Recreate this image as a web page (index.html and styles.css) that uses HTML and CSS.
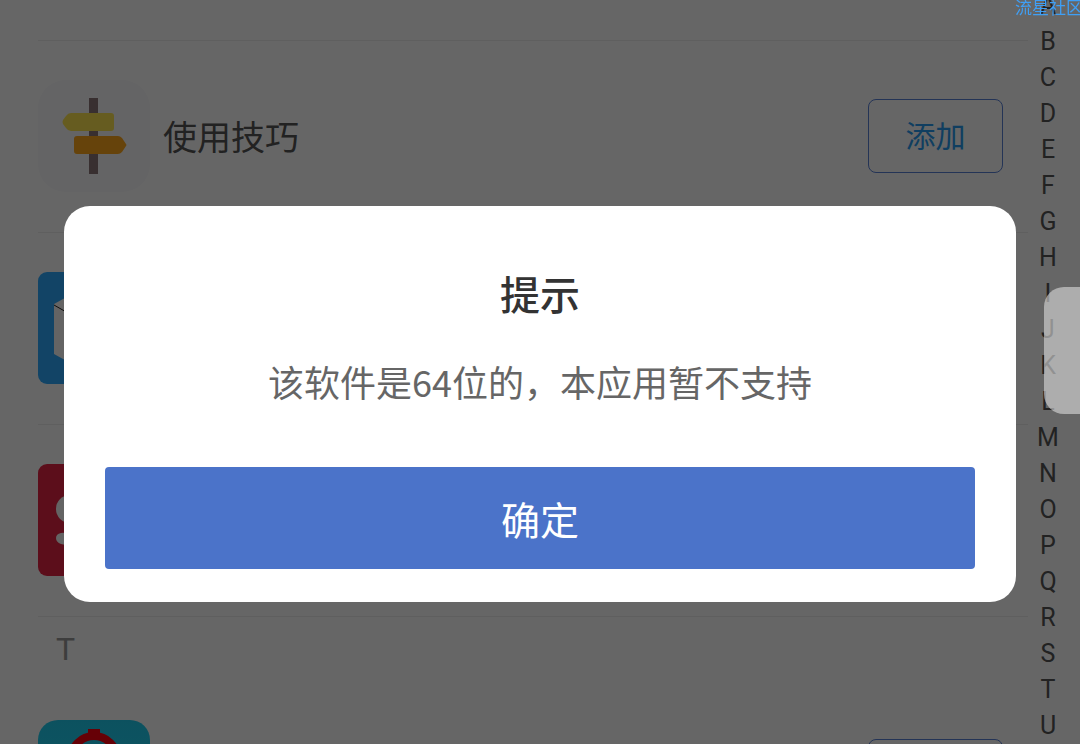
FILE: index.html
```html
<!DOCTYPE html>
<html lang="zh-CN">
<head>
  <meta charset="UTF-8">
  <meta name="viewport" content="width=device-width, initial-scale=1.0">
  <title>添加应用</title>
  <link rel="stylesheet" href="styles.css">
</head>
<body>
  <div class="screen">
    <!-- 应用列表 -->
    <main class="app-list">
      <div class="list-top"></div>
      <div class="app-row">
        <svg class="app-icon" viewBox="0 0 112 112" aria-hidden="true">
          <rect width="112" height="112" rx="28" fill="#fafafc"/>
          <rect x="51" y="18" width="9" height="76" fill="#8c7678"/>
          <path d="M33 33h40q3 0 3 3v12q0 3-3 3H33q-3 0-5-3l-3-4q-1-2 0-4l3-4q2-3 5-3z" fill="#ffe650"/>
          <path d="M39 56h41q2 0 4 2l4 6q1 1 0 2l-4 6q-2 2-4 2H39q-3 0-3-3V59q0-3 3-3z" fill="#ffa81c"/>
        </svg>
        <span class="app-name">使用技巧</span>
        <button class="add-btn" type="button">添加</button>
      </div>
      <div class="app-row">
        <svg class="app-icon" viewBox="0 0 112 112" aria-hidden="true">
          <rect width="112" height="112" rx="9" fill="#2fabff"/>
          <path d="M16 32l40-22 40 22v50L56 104 16 82z" fill="#fafafa"/>
          <path d="M16 33l40 23 40-23" fill="none" stroke="#222" stroke-width="1"/>
        </svg>
      </div>
      <div class="app-row">
        <svg class="app-icon" viewBox="0 0 112 112" aria-hidden="true">
          <rect width="112" height="112" rx="9" fill="#e62545"/>
          <circle cx="32" cy="45" r="14" fill="#fafafa"/>
          <path d="M23 69q4-1 8 2 6 4 13 5v6q-12 0-21-2-5-2-5-6t5-5z" fill="#fafafa"/>
        </svg>
      </div>
      <h2 class="group-title">T</h2>
      <div class="app-row">
        <svg class="app-icon" viewBox="0 0 112 112" aria-hidden="true">
          <defs>
            <linearGradient id="teal" x1="0" y1="0" x2="0" y2="1">
              <stop offset="0" stop-color="#20cbee"/>
              <stop offset="1" stop-color="#22e0f6"/>
            </linearGradient>
          </defs>
          <rect width="112" height="112" rx="20" fill="url(#teal)"/>
          <circle cx="56" cy="39" r="23" fill="none" stroke="#ff0010" stroke-width="8"/>
          <path d="M50 9h12v6H50z" fill="#ff0010"/>
        </svg>
        <button class="add-btn" type="button">添加</button>
      </div>
    </main>

    <!-- 字母索引 -->
    <nav class="letters" aria-label="字母索引">
      <span>A</span><span>B</span><span>C</span><span>D</span><span>E</span><span>F</span><span>G</span>
      <span>H</span><span>I</span><span>J</span><span>K</span><span>L</span><span>M</span><span>N</span>
      <span>O</span><span>P</span><span>Q</span><span>R</span><span>S</span><span>T</span><span>U</span>
    </nav>
  </div>

  <!-- 提示弹窗 -->
  <div class="mask">
    <div class="dialog" role="alertdialog" aria-modal="true" aria-labelledby="dialog-title" aria-describedby="dialog-text">
      <h1 class="dialog-title" id="dialog-title">提示</h1>
      <p class="dialog-text" id="dialog-text">该软件是64位的，本应用暂不支持</p>
      <button class="dialog-btn" type="button">确定</button>
    </div>
  </div>

  <div class="side-handle"></div>
  <div class="watermark">流星社区</div>
</body>
</html>
```

FILE: styles.css
```css
* {
  box-sizing: border-box;
}
body {
  margin: 0;
  background: #fff;
  font-family: Roboto, "Noto Sans CJK SC", sans-serif;
  overflow: hidden;
}
.screen {
  display: flex;
  height: 100vh;
  overflow: hidden;
}

/* 列表 */
.app-list {
  flex: 1;
  padding-left: 38px;
}
.list-top {
  height: 41px;
  border-bottom: 1px solid #eee;
}
.app-row {
  display: flex;
  align-items: center;
  gap: 13px;
  padding: 39px 25px 40px 0;
  border-bottom: 1px solid #eee;
}
.app-icon {
  width: 112px;
  height: 112px;
  flex-shrink: 0;
}
.app-name {
  padding-top: 4px;
  font-size: 34px;
  line-height: 48px;
  color: #555;
}
.add-btn {
  width: 135px;
  height: 74px;
  margin-left: auto;
  padding: 0 0 4px;
  border: 1px solid #5a82d8;
  border-radius: 8px;
  background: none;
  color: #2a9cf0;
  font-family: inherit;
  font-size: 30px;
}
.group-title {
  margin: 0;
  padding-left: 18px;
  font-size: 32px;
  font-weight: 400;
  line-height: 64px;
  color: #999;
}

/* 右侧字母 */
.letters {
  display: flex;
  flex-direction: column;
  justify-content: flex-end;
  width: 52px;
  padding-right: 12px;
  font-size: 25px;
  line-height: 36px;
  text-align: center;
  color: #555;
}

/* 弹窗 */
.mask {
  position: fixed;
  inset: 0;
  display: flex;
  align-items: center;
  padding: 64px 64px 0;
  background: rgba(0, 0, 0, 0.6);
}
.dialog {
  flex: 1;
  padding: 57px 41px 33px;
  border-radius: 26px;
  background: #fff;
  font-family: "Noto Sans CJK SC", sans-serif;
  text-align: center;
}
.dialog-title {
  margin: 0 0 32px;
  font-size: 40px;
  font-weight: 500;
  line-height: 60px;
  color: #333;
}
.dialog-text {
  margin: 0 0 60px;
  font-size: 36px;
  line-height: 52px;
  color: #666;
}
.dialog-btn {
  display: block;
  width: 100%;
  height: 102px;
  padding: 0;
  border: 0;
  border-radius: 4px;
  background: #4b73c9;
  color: #fff;
  font-family: inherit;
  font-size: 39px;
}

/* 悬浮 */
.side-handle {
  position: fixed;
  top: 287px;
  right: 0;
  width: 36px;
  height: 127px;
  border-radius: 20px 0 0 20px;
  background: rgba(220, 220, 220, 0.6);
}
.watermark {
  position: fixed;
  top: 0;
  right: -3px;
  font-size: 17px;
  line-height: 17px;
  white-space: nowrap;
  color: #3f9ff5;
}
```
